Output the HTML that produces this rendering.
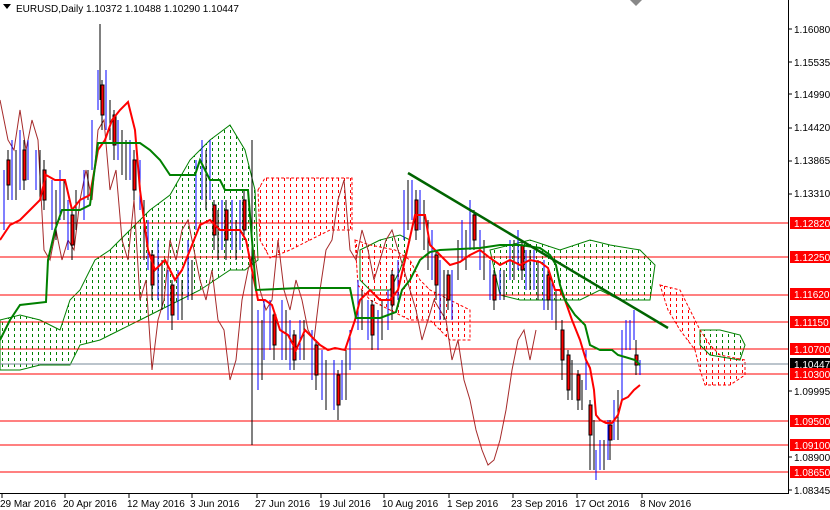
<!DOCTYPE html>
<html><head><meta charset="utf-8"><style>
html,body{margin:0;padding:0;background:#fff;width:830px;height:510px;overflow:hidden}
svg{display:block}
text{font-family:"Liberation Sans",sans-serif;font-size:10px}
</style></head><body>
<svg width="830" height="510" viewBox="0 0 830 510">
<defs>
<clipPath id="cg">
<polygon points="0,320 20,315 40,320 60,330 70,300 80,290 95,260 110,250 130,230 150,210 170,195 190,160 210,140 230,125 245,150 255,190 258,260 245,270 230,270 215,280 200,290 180,300 160,310 140,320 120,330 100,340 80,345 70,365 40,365 20,370 0,370"/>
<polygon points="360,250 380,240 400,235 410,240 400,270 390,290 370,290 360,280"/>
<polygon points="490,250 530,240 560,250 590,240 610,245 640,250 655,265 650,300 620,300 600,290 580,300 560,300 520,300 500,295"/>
<polygon points="700,330 720,330 740,335 745,345 740,360 710,355 700,345"/>
</clipPath>
<clipPath id="cr">
<polygon points="258,190 265,178 300,178 352,178 352,230 330,230 310,240 290,250 270,258 260,240"/>
<polygon points="355,240 370,245 395,250 410,260 420,280 430,290 450,300 470,310 470,340 450,340 430,320 410,320 390,310 370,300 358,285"/>
<polygon points="660,285 680,290 690,310 700,330 710,345 720,355 745,360 745,375 730,385 705,385 700,370 695,350 680,330 668,310"/>
</clipPath>
</defs>
<rect width="830" height="510" fill="#fff"/>
<!-- cloud hatching -->
<g clip-path="url(#cg)" stroke="#008000" stroke-width="1" stroke-dasharray="3,3">
<path d="M2.5 100V400M8.5 100V400M14.5 100V400M20.5 100V400M26.5 100V400M32.5 100V400M38.5 100V400M44.5 100V400M50.5 100V400M56.5 100V400M62.5 100V400M68.5 100V400M74.5 100V400M80.5 100V400M86.5 100V400M92.5 100V400M98.5 100V400M104.5 100V400M110.5 100V400M116.5 100V400M122.5 100V400M128.5 100V400M134.5 100V400M140.5 100V400M146.5 100V400M152.5 100V400M158.5 100V400M164.5 100V400M170.5 100V400M176.5 100V400M182.5 100V400M188.5 100V400M194.5 100V400M200.5 100V400M206.5 100V400M212.5 100V400M218.5 100V400M224.5 100V400M230.5 100V400M236.5 100V400M242.5 100V400M248.5 100V400M254.5 100V400M362.5 100V400M368.5 100V400M374.5 100V400M380.5 100V400M386.5 100V400M392.5 100V400M398.5 100V400M404.5 100V400M494.5 100V400M500.5 100V400M506.5 100V400M512.5 100V400M518.5 100V400M524.5 100V400M530.5 100V400M536.5 100V400M542.5 100V400M548.5 100V400M554.5 100V400M560.5 100V400M566.5 100V400M572.5 100V400M578.5 100V400M584.5 100V400M590.5 100V400M596.5 100V400M602.5 100V400M608.5 100V400M614.5 100V400M620.5 100V400M626.5 100V400M632.5 100V400M638.5 100V400M644.5 100V400M650.5 100V400M704.5 100V400M710.5 100V400M716.5 100V400M722.5 100V400M728.5 100V400M734.5 100V400M740.5 100V400"/>
</g>
<g clip-path="url(#cr)" stroke="#ff0000" stroke-width="1" stroke-dasharray="3,3">
<path d="M260.5 100V400M266.5 100V400M272.5 100V400M278.5 100V400M284.5 100V400M290.5 100V400M296.5 100V400M302.5 100V400M308.5 100V400M314.5 100V400M320.5 100V400M326.5 100V400M332.5 100V400M338.5 100V400M344.5 100V400M350.5 100V400M356.5 100V400M362.5 100V400M368.5 100V400M374.5 100V400M380.5 100V400M386.5 100V400M392.5 100V400M398.5 100V400M404.5 100V400M410.5 100V400M416.5 100V400M422.5 100V400M428.5 100V400M434.5 100V400M440.5 100V400M446.5 100V400M452.5 100V400M458.5 100V400M464.5 100V400M664.5 100V400M670.5 100V400M676.5 100V400M682.5 100V400M688.5 100V400M694.5 100V400M700.5 100V400M706.5 100V400M712.5 100V400M718.5 100V400M724.5 100V400M730.5 100V400M736.5 100V400M742.5 100V400"/>
</g>
<g fill="none" stroke="#008000" stroke-width="1">
<polygon points="0,320 20,315 40,320 60,330 70,300 80,290 95,260 110,250 130,230 150,210 170,195 190,160 210,140 230,125 245,150 255,190 258,260 245,270 230,270 215,280 200,290 180,300 160,310 140,320 120,330 100,340 80,345 70,365 40,365 20,370 0,370"/>
<polygon points="360,250 380,240 400,235 410,240 400,270 390,290 370,290 360,280"/>
<polygon points="490,250 530,240 560,250 590,240 610,245 640,250 655,265 650,300 620,300 600,290 580,300 560,300 520,300 500,295"/>
<polygon points="700,330 720,330 740,335 745,345 740,360 710,355 700,345"/>
</g>
<g fill="none" stroke="#ff0000" stroke-width="1" stroke-dasharray="3,2">
<polygon points="258,190 265,178 300,178 352,178 352,230 330,230 310,240 290,250 270,258 260,240"/>
<polygon points="355,240 370,245 395,250 410,260 420,280 430,290 450,300 470,310 470,340 450,340 430,320 410,320 390,310 370,300 358,285"/>
<polygon points="660,285 680,290 690,310 700,330 710,345 720,355 745,360 745,375 730,385 705,385 700,370 695,350 680,330 668,310"/>
</g>
<!-- horizontal red lines -->
<g stroke="#ff0000" stroke-width="1">
<line x1="0" y1="223" x2="788" y2="223"/><line x1="0" y1="257" x2="788" y2="257"/>
<line x1="0" y1="295" x2="788" y2="295"/><line x1="0" y1="322" x2="788" y2="322"/>
<line x1="0" y1="349" x2="788" y2="349"/><line x1="0" y1="374" x2="788" y2="374"/>
<line x1="0" y1="421" x2="788" y2="421"/><line x1="0" y1="445" x2="788" y2="445"/>
<line x1="0" y1="472" x2="788" y2="472"/>
</g>
<line x1="0" y1="364" x2="788" y2="364" stroke="#778899"/>
<!-- brown line -->
<polyline fill="none" stroke="#a52a2a" stroke-width="1" points="0,100 8,140 14,150 20,110 26,150 32,120 38,140 44,250 50,260 56,230 62,260 68,240 74,250 80,200 86,170 92,200 98,130 104,120 110,190 116,170 122,240 128,260 134,200 140,300 146,280 152,370 158,320 164,300 170,240 176,260 182,230 188,220 194,250 200,280 206,300 212,270 218,320 224,330 230,380 236,360 242,300 248,270 254,250 260,290 266,310 272,300 278,240 284,290 290,310 296,280 302,300 308,330 314,340 320,290 326,250 332,240 338,200 344,180 350,250 356,260 362,230 368,250 374,280 380,260 386,240 392,230 398,250 404,270 410,290 416,310 422,340 428,320 434,300 440,310 446,320 452,360 458,340 464,380 470,400 476,430 482,450 488,465 494,460 500,440 506,410 512,370 518,340 524,330 530,360 536,330"/>
<!-- candles -->
<g stroke-width="1">
<path fill="none" stroke="#0000ff" d="M4 170V230M12 140V200M20 130V190M28 140V180M36 150V190M52 180V230M60 170V220M68 200V250M84 170V220M92 120V170M98 70V110M106 70V130M118 120V160M130 140V180M140 160V210M148 220V270M158 240V300M168 270V320M178 270V320M188 240V300M196 160V230M202 140V200M210 140V200M222 200V250M232 200V250M240 200V250M258 310V390M264 300V360M270 300V350M282 300V360M290 320V370M300 320V360M312 330V380M322 350V400M334 360V410M342 360V400M350 330V370M358 280V330M368 300V340M378 310V350M388 290V330M398 260V300M404 190V240M412 180V220M420 190V230M432 230V280M440 260V320M452 270V320M462 220V260M470 200V250M480 230V270M490 260V300M500 270V300M510 240V280M518 230V270M526 250V290M534 250V290M544 260V310M552 280V320M586 350V390M596 450V480M600 440V470M608 420V460M614 400V440M622 330V400M626 320V350M630 320V350M634 310V340M640 360V375"/>
<path fill="none" stroke="#000" d="M8 150V200M16 150V200M24 140V190M40 150V200M44 160V210M56 190V240M64 180V220M72 210V260M76 190V230M88 170V200M100 24V100M102 80V130M110 100V140M114 110V160M122 130V175M126 140V180M134 150V200M144 200V260M152 250V300M162 260V310M172 280V330M182 280V320M192 260V300M206 150V210M214 200V250M218 210V260M226 200V260M236 220V260M244 190V240M252 140V445M262 320V380M274 310V360M286 310V360M294 330V370M304 320V360M316 340V390M326 360V410M338 370V420M346 350V400M362 290V330M372 300V350M382 300V340M392 270V320M408 180V230M416 190V240M424 200V250M428 220V270M436 250V300M444 270V320M448 270V310M458 240V280M466 230V270M474 210V250M484 240V280M494 270V310M504 270V300M514 240V280M522 240V280M530 250V290M538 260V300M548 270V310M556 290V330M562 320V380M568 350V400M572 360V400M578 370V410M582 380V410M590 400V470M594 420V470M604 440V470M610 420V460M618 390V440M636 340V375"/>
<path fill="#ff0000" stroke="#000" d="M7 160h3v25h-3zM23 150h3v30h-3zM43 170h3v30h-3zM71 215h3v30h-3zM101 85h3v30h-3zM113 115h3v30h-3zM133 160h3v30h-3zM151 255h3v30h-3zM171 285h3v30h-3zM213 205h3v30h-3zM225 210h3v30h-3zM243 200h3v30h-3zM273 315h3v30h-3zM293 335h3v25h-3zM315 345h3v30h-3zM337 375h3v30h-3zM371 305h3v30h-3zM391 275h3v30h-3zM415 200h3v30h-3zM435 255h3v30h-3zM447 275h3v25h-3zM473 215h3v25h-3zM493 275h3v25h-3zM521 245h3v25h-3zM547 275h3v25h-3zM561 330h3v30h-3zM567 355h3v35h-3zM577 375h3v25h-3zM589 405h3v30h-3zM609 425h3v15h-3zM635 355h3v10h-3z"/>
</g>
<!-- tenkan red -->
<polyline fill="none" stroke="#ff0000" stroke-width="2" points="0,240 10,225 20,220 30,210 40,200 46,175 55,180 65,180 72,210 80,200 90,195 98,150 105,140 112,120 120,110 128,102 135,130 140,190 148,250 155,270 165,260 175,280 182,270 190,250 200,225 210,220 220,230 230,230 240,230 246,240 252,270 258,300 265,300 272,305 280,330 288,335 296,350 305,330 315,340 320,345 328,350 335,348 345,350 355,320 360,300 370,290 380,300 390,300 398,290 405,260 415,215 425,215 430,245 440,255 450,265 460,262 470,255 480,250 490,258 500,265 510,260 520,265 530,260 540,262 548,268 555,290 560,290 565,300 572,320 580,340 586,360 590,368 594,390 596,415 600,420 606,423 612,423 618,415 622,400 628,397 634,390 640,385"/>
<!-- kijun green -->
<polyline fill="none" stroke="#008000" stroke-width="2" points="0,340 10,320 20,305 46,302 48,260 55,230 62,210 70,210 80,210 90,205 98,143 120,143 140,143 150,150 160,160 170,175 195,175 200,160 210,180 220,180 225,190 248,190 252,240 256,290 300,288 350,288 356,318 380,318 396,312 402,290 410,280 420,260 430,252 440,250 480,248 500,245 520,245 540,248 550,255 556,265 560,285 565,300 575,315 580,320 585,325 590,345 600,350 612,350 618,355 625,357 635,360 640,365"/>
<line x1="408" y1="173" x2="668" y2="328" stroke="#006400" stroke-width="2.5"/>
<!-- axes -->
<line x1="788.5" y1="0" x2="788.5" y2="494" stroke="#000"/>
<line x1="0" y1="493.5" x2="789" y2="493.5" stroke="#000"/>
<polygon points="630,0 642,0 636,6" fill="#888"/>
<g fill="#000">
<text x="794" y="33">1.16080</text><text x="794" y="66">1.15535</text><text x="794" y="98">1.14990</text>
<text x="794" y="131">1.14420</text><text x="794" y="164">1.13865</text><text x="794" y="197">1.13310</text>
<text x="794" y="395">1.09995</text><text x="794" y="461">1.08900</text><text x="794" y="494">1.08345</text>
</g>
<g stroke="#000"><path d="M788 29h4M788 62h4M788 94h4M788 128h4M788 161h4M788 194h4M788 391h4M788 457h4M788 490h4"/></g>
<g>
<rect x="790" y="217" width="40" height="12" fill="#ff0000"/><text x="794" y="227" fill="#fff">1.12820</text>
<rect x="790" y="251" width="40" height="12" fill="#ff0000"/><text x="794" y="261" fill="#fff">1.12250</text>
<rect x="790" y="288" width="40" height="12" fill="#ff0000"/><text x="794" y="298" fill="#fff">1.11620</text>
<rect x="790" y="316" width="40" height="12" fill="#ff0000"/><text x="794" y="326" fill="#fff">1.11150</text>
<rect x="790" y="343" width="40" height="12" fill="#ff0000"/><text x="794" y="353" fill="#fff">1.10700</text>
<rect x="790" y="358" width="40" height="12" fill="#000"/><text x="794" y="368" fill="#fff">1.10447</text>
<rect x="790" y="368" width="40" height="12" fill="#ff0000"/><text x="794" y="378" fill="#fff">1.10300</text>
<rect x="790" y="415" width="40" height="12" fill="#ff0000"/><text x="794" y="425" fill="#fff">1.09500</text>
<rect x="790" y="439" width="40" height="12" fill="#ff0000"/><text x="794" y="449" fill="#fff">1.09100</text>
<rect x="790" y="466" width="40" height="12" fill="#ff0000"/><text x="794" y="476" fill="#fff">1.08650</text>
</g>
<g fill="#000">
<text x="0" y="507">29 Mar 2016</text><text x="63" y="507">20 Apr 2016</text><text x="127" y="507">12 May 2016</text>
<text x="190" y="507">3 Jun 2016</text><text x="255" y="507">27 Jun 2016</text><text x="319" y="507">19 Jul 2016</text>
<text x="382" y="507">10 Aug 2016</text><text x="447" y="507">1 Sep 2016</text><text x="511" y="507">23 Sep 2016</text>
<text x="575" y="507">17 Oct 2016</text><text x="640" y="507">8 Nov 2016</text>
</g>
<g stroke="#000"><path d="M2 494v4M65 494v4M129 494v4M192 494v4M257 494v4M321 494v4M384 494v4M449 494v4M513 494v4M577 494v4M642 494v4"/></g>
<polygon points="3,4 11,4 7,9" fill="#000"/>
<text x="16" y="12" fill="#000">EURUSD,Daily  1.10372 1.10488 1.10290 1.10447</text>
</svg>
</body></html>
